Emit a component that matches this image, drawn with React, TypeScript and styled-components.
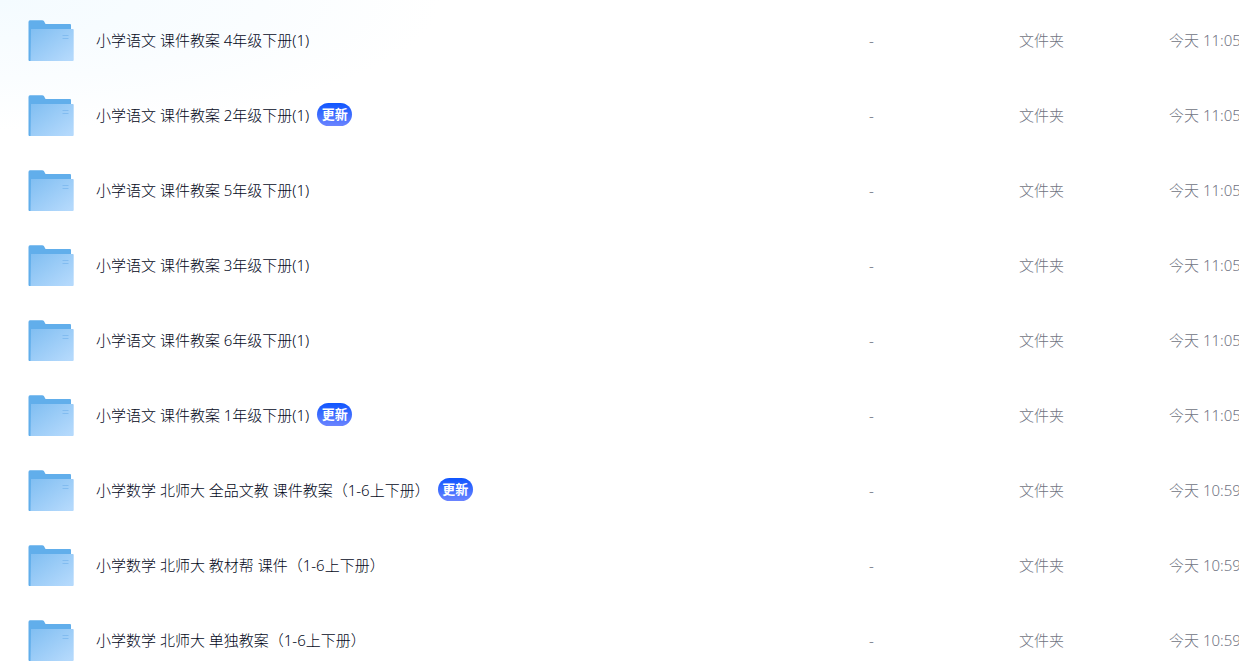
import React from "react";
import styled, { createGlobalStyle } from "styled-components";

const GlobalStyle = createGlobalStyle`
  * { box-sizing: border-box; }
  html { scrollbar-width: none; }
  body {
    margin: 0;
    overflow-x: hidden;
    background: #fff;
    font-family: "Noto Sans", "Noto Sans CJK SC", sans-serif;
    font-size: 15px;
    font-weight: 300;
    line-height: 24px;
  }
`;

const Page = styled.main`
  padding: 3px 0 0 28px;
  overflow: hidden;
  background: radial-gradient(ellipse 440px 130px at 0 0, #f4fbff, #fafdff 60%, #fff) no-repeat;
`;

const FileTable = styled.table`
  width: 100%;
  table-layout: fixed;
  border-collapse: collapse;
`;

const Column = styled.col<{ $width?: number }>`
  width: ${(p) => (p.$width ? `${p.$width}px` : "auto")};
`;

const Row = styled.tr`
  height: 75px;
`;

const Cell = styled.td`
  padding: 0;
  vertical-align: middle;
  white-space: nowrap;
`;

const DetailCell = styled(Cell)`
  padding-bottom: 2px;
  color: #6f7382;
`;

const NameGroup = styled.div`
  display: flex;
  align-items: center;
`;

const FileLink = styled.a`
  margin-left: 22px;
  padding-bottom: 2px;
  color: #03081a;
  text-decoration: none;
`;

const Badge = styled.span`
  display: inline-flex;
  align-items: center;
  justify-content: center;
  width: 35px;
  height: 23px;
  margin: 0 0 2px 8px;
  padding-bottom: 2px;
  border-radius: 12px;
  background: linear-gradient(#0f55ff, #6b84ff);
  color: #fff;
  font-size: 13px;
  font-weight: 700;
`;

const FolderSvg = styled.svg`
  display: block;
  flex: none;
`;

const FolderIcon = () => (
  <FolderSvg width="46" height="42" viewBox="0 0 46 42" aria-hidden="true">
    <path d="M0.500 2Q0.500 0.300 2 0.300H14Q15.500 0.300 16.200 1.500L17.200 3.400Q17.500 4 18.500 4H42Q43 4 43 5V20H3V41H1.500Q0.500 41 0.500 40Z" fill="#61aeeb" />
    <path d="M3 9H45Q45.700 9 45.700 10V40Q45.700 41 44.700 41H2.500Z" fill="url(#folder-front)" />
    <path d="M34.500 15.500H40.500M34.500 18.500H40.500" stroke="#82bcf0" strokeWidth="1" />
    <defs>
      <linearGradient id="folder-front" x1="6" y1="8" x2="34" y2="45" gradientUnits="userSpaceOnUse">
        <stop stopColor="#82bff2" />
        <stop offset="1" stopColor="#b4d9fc" />
      </linearGradient>
    </defs>
  </FolderSvg>
);

interface FileEntry {
  name: string;
  time: string;
  updated?: boolean;
}

const files: FileEntry[] = [
  { name: "小学语文 课件教案 4年级下册(1)", time: "11:05" },
  { name: "小学语文 课件教案 2年级下册(1)", time: "11:05", updated: true },
  { name: "小学语文 课件教案 5年级下册(1)", time: "11:05" },
  { name: "小学语文 课件教案 3年级下册(1)", time: "11:05" },
  { name: "小学语文 课件教案 6年级下册(1)", time: "11:05" },
  { name: "小学语文 课件教案 1年级下册(1)", time: "11:05", updated: true },
  { name: "小学数学 北师大 全品文教 课件教案（1-6上下册）", time: "10:59", updated: true },
  { name: "小学数学 北师大 教材帮 课件（1-6上下册）", time: "10:59" },
  { name: "小学数学 北师大 单独教案（1-6上下册）", time: "10:59" },
];

export default function App() {
  return (
    <>
      <GlobalStyle />
      <Page lang="zh-CN">
        <FileTable>
          <colgroup>
            <Column />
            <Column $width={150} />
            <Column $width={150} />
            <Column $width={70} />
          </colgroup>
          <tbody>
            {files.map((file) => (
              <Row key={file.name}>
                <Cell>
                  <NameGroup>
                    <FolderIcon />
                    <FileLink href="#">{file.name}</FileLink>
                    {file.updated && <Badge>更新</Badge>}
                  </NameGroup>
                </Cell>
                <DetailCell>-</DetailCell>
                <DetailCell>文件夹</DetailCell>
                <DetailCell>今天 {file.time}</DetailCell>
              </Row>
            ))}
          </tbody>
        </FileTable>
      </Page>
    </>
  );
}
